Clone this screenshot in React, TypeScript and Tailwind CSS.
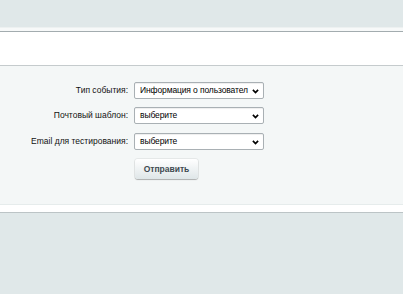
import React from "react";

function Chevron() {
  return (
    <svg width="7" height="5" viewBox="0 0 7 5" className="absolute right-[4px] top-[6px]">
      <path d="M0.9 0.9 L3.5 3.5 L6.1 0.9" fill="none" stroke="#000" strokeWidth="1.7" />
    </svg>
  );
}

function Select({ value }: { value: string }) {
  return (
    <div className="relative w-[130px] h-[17px] bg-white border border-[#a9b0b4] rounded-[2px] shadow-[inset_0_1px_1px_rgba(0,0,0,0.07)] text-[8.5px] leading-[15px] pl-[5px] text-black whitespace-nowrap">
      <span className="block tracking-[-0.12px]">{value}</span>
      <Chevron />
    </div>
  );
}

function Row({ label, value, className }: { label: string; value: string; className?: string }) {
  return (
    <div className={"flex items-center h-[17px] " + (className ?? "")}>
      <div className="w-[129px] pr-[1px] text-right text-[8.5px] text-[#111] whitespace-nowrap">{label}</div>
      <div className="w-[5px]" />
      <Select value={value} />
    </div>
  );
}

export default function App() {
  return (
    <div className="w-[403px] h-[294px] bg-[#e0e8e9] overflow-hidden" style={{ fontFamily: '"Liberation Sans", Arial, sans-serif' }}>
      <div className="h-[27px]" />
      <div className="h-px bg-[#edf1f1]" />
      <div className="h-[3px] bg-[#f7f9f9]" />
      <div className="h-px bg-[#a3acaf]" />
      <div className="h-[33px] bg-white" />
      <div className="h-px bg-[#c5cbcd]" />
      <div className="h-[138px] bg-[#f4f7f7] flex flex-col pt-[16px]">
        <Row label="Тип события:" value="Информация о пользовател" />
        <Row label="Почтовый шаблон:" value="выберите" className="mt-[8px]" />
        <Row label="Email для тестирования:" value="выберите" className="mt-[9px]" />
        <div className="pl-[135px] mt-[9px]">
          <div className="w-[63px] h-[20px] rounded-[3px] bg-gradient-to-b from-white to-[#dfe6e8] shadow-[0_1px_1px_rgba(0,0,0,0.25),0_0_0_1px_rgba(0,0,0,0.06)] text-[8.5px] font-bold text-[#3f4a51] flex items-center justify-center">
            Отправить
          </div>
        </div>
      </div>
      <div className="h-px bg-[#e6ecec]" />
      <div className="h-[7px] bg-white" />
      <div className="h-px bg-[#bcc4c6]" />
    </div>
  );
}
